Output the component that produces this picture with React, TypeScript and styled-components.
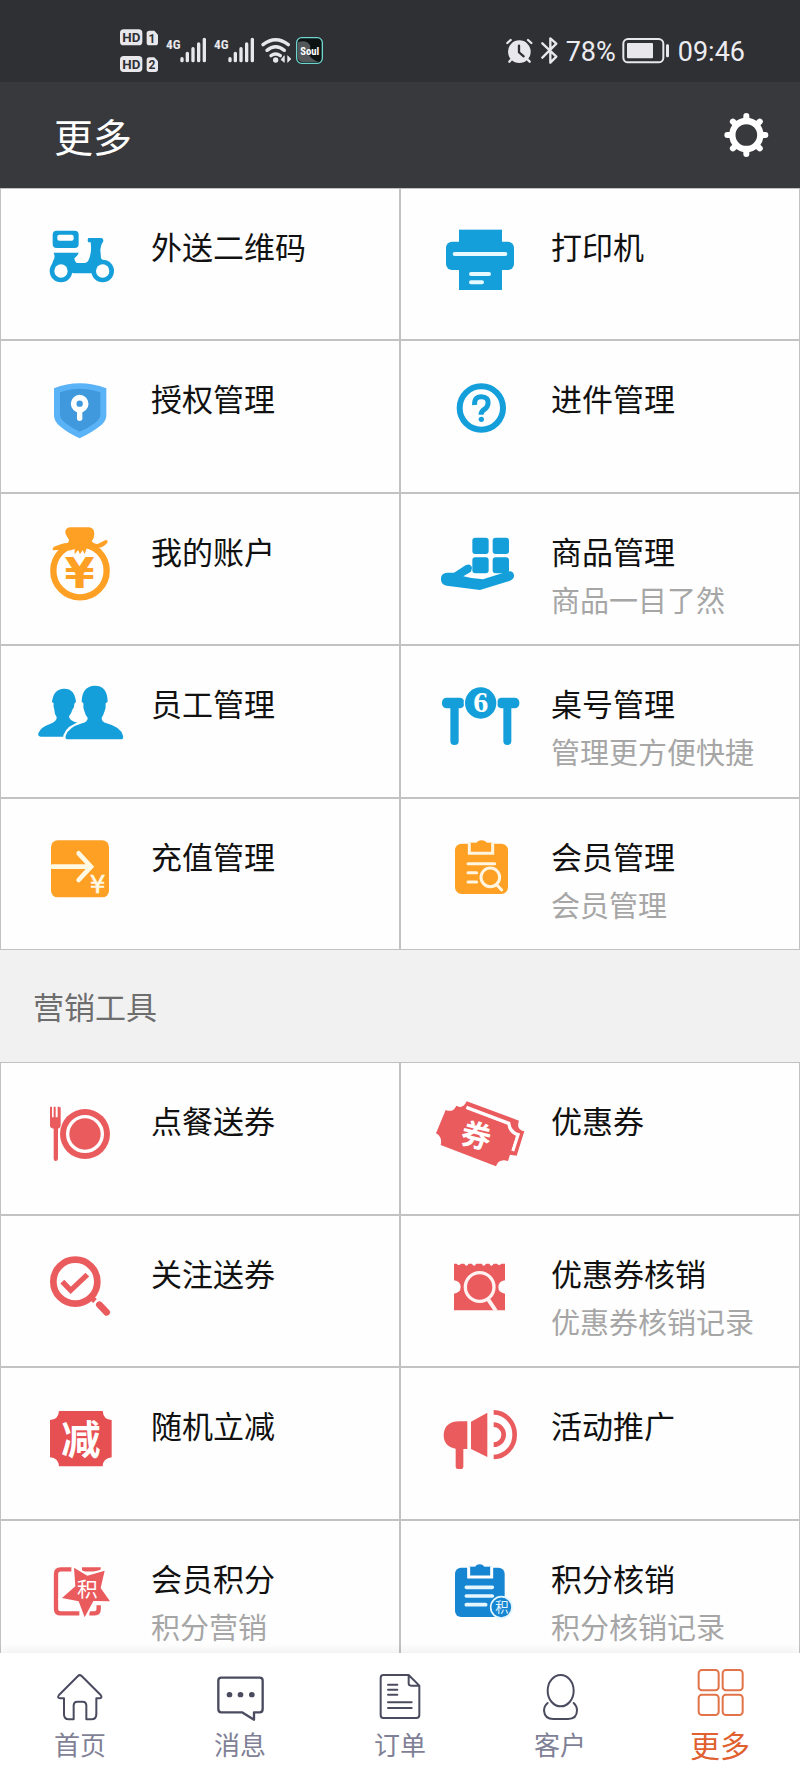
import React from "react";
import styled, { createGlobalStyle } from "styled-components";

const GlobalStyle = createGlobalStyle`
  *, *::before, *::after { box-sizing: border-box; }
  body {
    margin: 0;
    background: #fff;
    font-family: "Noto Sans CJK SC", "Noto Sans", sans-serif;
  }
`;

const cjk = '"Noto Sans CJK SC", sans-serif';
const BLUE = "#149fda";
const ORANGE = "#fea024";
const RED = "#ea5b5e";

/* ---------- layout ---------- */

const Screen = styled.div`
  display: flex;
  flex-direction: column;
  height: 100vh;
  overflow: hidden;
`;

const StatusBar = styled.div`
  flex: none;
  display: flex;
  align-items: center;
  justify-content: space-between;
  height: 82px;
  padding: 0 55px 0 119px;
  background: #2f3034;
  color: #ececf0;
  font: 400 27px/40px Roboto, sans-serif;
`;

const StatusGroup = styled.div<{ $gap: number }>`
  display: flex;
  align-items: center;
  gap: ${(p) => p.$gap}px;
`;

const StatusText = styled.span`
  padding-top: 22px;
`;

const StatusSvg = styled.svg<{ $width: number }>`
  flex: none;
  width: ${(p) => p.$width}px;
  height: 82px;
  overflow: visible;
`;

const Header = styled.header`
  flex: none;
  display: flex;
  align-items: center;
  justify-content: space-between;
  height: 106px;
  padding: 0 30px 0 54px;
  background: #38393d;
  color: #fff;
`;

const Title = styled.h1`
  margin: 0;
  font-size: 39px;
  line-height: 54px;
  font-weight: 400;
`;

const IconButton = styled.button`
  display: block;
  padding: 0;
  border: 0;
  background: none;
  cursor: pointer;

  svg { display: block; width: 48px; height: 48px; }
`;

const Content = styled.main`
  flex: 1;
  min-height: 0;
  overflow-y: auto;
  scrollbar-width: none;
`;

const Grid = styled.div<{ $minHeight: number }>`
  display: grid;
  grid-template-columns: 1fr 1fr;
  grid-auto-rows: 1fr;
  min-height: ${(p) => p.$minHeight}px;
`;

const Cell = styled.a`
  display: flex;
  align-items: flex-start;
  gap: 23px;
  padding: 27px 0 0 31px;
  border: 1px solid #c2c2c2;
  background: #fefefe;
  color: #111;
  text-decoration: none;
`;

const CellIcon = styled.svg`
  flex: none;
  width: 96px;
  height: 96px;
  overflow: visible;
`;

const CellText = styled.div`
  display: flex;
  flex-direction: column;
  padding-top: 6px;
`;

const CellTitle = styled.span`
  font-size: 31px;
  line-height: 48px;
`;

const CellNote = styled.span`
  color: #a6a6a6;
  font-size: 29px;
  line-height: 48px;
`;

const SectionTitle = styled.h2`
  display: flex;
  align-items: center;
  height: 112px;
  margin: 0;
  padding: 0 33px;
  background: #f1f1f1;
  color: #6d6d6d;
  font-size: 31px;
  line-height: 48px;
  font-weight: 400;
`;

const TabBar = styled.nav`
  flex: none;
  position: relative;
  display: grid;
  grid-template-columns: repeat(5, 1fr);
  height: 125px;
  background: #fff;
  box-shadow: 0 -2px 10px rgba(0, 0, 0, 0.07);
`;

const Tab = styled.a<{ $active?: boolean }>`
  display: flex;
  flex-direction: column;
  align-items: center;
  padding-top: 14px;
  color: ${(p) => (p.$active ? "#e0602f" : "#7f7f96")};
  font-size: ${(p) => (p.$active ? 30 : 26)}px;
  line-height: 34px;
  font-weight: 400;
  text-decoration: none;
`;

const TabIcon = styled.svg`
  width: 60px;
  height: 60px;
  fill: none;
  stroke-linecap: round;
  stroke-linejoin: round;
`;

/* ---------- status bar icons ---------- */

const HdBadges = () => (
  <StatusSvg $width={41} viewBox="357 0 123 246" aria-hidden="true">
    {[
      { y: 88, n: "1" },
      { y: 168, n: "2" },
    ].map(({ y, n }) => (
      <g key={n} fontFamily="Roboto, sans-serif" fontWeight="700" textAnchor="middle">
        <rect x="360" y={y} width="67" height="48" rx="11" fill="#e8e8ec" />
        <text x="394" y={y + 38} fontSize="40" fill="#2f3034">HD</text>
        <path d={`M448 ${y + 4}h15l11 12v24q0 8-8 8h-18q-8 0-8-8v-28q0-8 8-8z`} fill="#e8e8ec" />
        <text x="456" y={y + 40} fontSize="36" fill="#2f3034">{n}</text>
      </g>
    ))}
  </StatusSvg>
);

const Signal = () => (
  <StatusSvg $width={43} viewBox="495 0 129 246" aria-hidden="true">
    <text
      x="498"
      y="147"
      fontSize="40"
      fontWeight="700"
      fontFamily='"Roboto Condensed", "Liberation Sans Narrow", Roboto, sans-serif'
      fill="#e8e8ec"
    >
      4G
    </text>
    <g stroke="#e8e8ec" strokeWidth="10" strokeLinecap="round">
      <path d="M546 176v6M562 160v22M579 146v36M596 132v50M613 118v64" />
    </g>
  </StatusSvg>
);

const Wifi = () => (
  <StatusSvg $width={30} viewBox="784 0 90 246" aria-hidden="true">
    <g fill="none" stroke="#e8e8ec" strokeWidth="10" strokeLinecap="round">
      <path d="M790 134Q828 104 866 134" />
      <path d="M802 151Q828 130 854 151" />
      <path d="M814 167Q828 157 842 167" />
    </g>
    <circle cx="828" cy="180" r="8" fill="#e8e8ec" />
    <path d="M854 167v20l-10-8zM864 187v-20l10 10z" fill="#e8e8ec" stroke="#e8e8ec" strokeWidth="2" />
  </StatusSvg>
);

const SoulBadge = () => (
  <StatusSvg $width={28} viewBox="888 0 84 246" aria-hidden="true">
    <rect x="890" y="113" width="77" height="77" rx="15" fill="#0d1213" stroke="#6fd6cf" strokeWidth="4" />
    <path d="M893 126q30-8 38 12l-4 28q12 16 30 20h-48q-14 0-16-14z" fill="#54585a" />
    <text
      x="929"
      y="165"
      fontSize="32"
      fontWeight="700"
      fontFamily='"Roboto Condensed", "Liberation Sans Narrow", Roboto, sans-serif'
      textAnchor="middle"
      fill="#fff"
    >
      Soul
    </text>
  </StatusSvg>
);

const Alarm = () => (
  <StatusSvg $width={30} viewBox="318 0 90 246" aria-hidden="true">
    <circle cx="361" cy="155" r="34" fill="#e8e8ec" />
    <g fill="none" strokeLinecap="round">
      <path d="M325 129l10-9M397 129l-10-9" stroke="#e8e8ec" strokeWidth="7" />
      <path d="M336 179l-5 6M386 179l6 6" stroke="#e8e8ec" strokeWidth="7" />
      <path d="M360 137v20l14 12" stroke="#2f3034" strokeWidth="7" />
    </g>
  </StatusSvg>
);

const Bluetooth = () => (
  <StatusSvg $width={19} viewBox="426 0 57 246" aria-hidden="true">
    <path
      d="M430 130l42 40-18 18v-73l18 16-42 42"
      fill="none"
      stroke="#e8e8ec"
      strokeWidth="7"
      strokeLinejoin="round"
      strokeLinecap="round"
    />
  </StatusSvg>
);

const Battery = () => (
  <StatusSvg $width={50} viewBox="663 0 150 246" aria-hidden="true">
    <rect x="667" y="117" width="120" height="70" rx="14" fill="none" stroke="#e8e8ec" strokeWidth="6" />
    <rect x="678" y="129" width="78" height="46" rx="3" fill="#e8e8ec" />
    <rect x="795" y="133" width="9" height="39" rx="4" fill="#e8e8ec" />
  </StatusSvg>
);

const Gear = () => (
  <svg viewBox="-73 -72 144 144" aria-hidden="true">
    <circle r="42" fill="none" stroke="#fff" strokeWidth="19" />
    {[0, 45, 90, 135, 180, 225, 270, 315].map((a) => (
      <path
        key={a}
        d="M0-46V-57"
        stroke="#fff"
        strokeWidth="18"
        strokeLinecap="round"
        transform={`rotate(${a})`}
      />
    ))}
  </svg>
);

/* ---------- feature icons ---------- */

const icons = {
  scooter: (
    <CellIcon viewBox="96 84 288 288">
      <g fill={BLUE}>
        <path
          fillRule="evenodd"
          d="M170 128h54q12 0 12 12v28q0 12-12 12h-54q-12 0-12-12v-28q0-12 12-12zM178 140q-6 0-6 6v6q0 6 6 6h37q6 0 6-6v-6q0-6-6-6z"
        />
        <path d="M160 194h76q-3 10-13 17 2 13 8 14h22q10 0 14-12 9-22 5-50h-7q-4-6 0-13h40q6 3 5 10-8 10-9 25l2 26 35 40-20 5h-97l-67-20 5-17q8-10 2-25z" />
        <circle cx="183" cy="249" r="34" />
        <circle cx="308" cy="249" r="34" />
      </g>
      <circle cx="183" cy="249" r="20" fill="#fff" />
      <circle cx="308" cy="249" r="20" fill="#fff" />
    </CellIcon>
  ),
  printer: (
    <CellIcon viewBox="96 84 288 288">
      <g fill={BLUE}>
        <rect x="177" y="125" width="129" height="181" />
        <rect x="138" y="161" width="204" height="85" rx="18" />
      </g>
      <path d="M164 198h152M213 258h54M213 283h33" stroke="#e6f9ff" strokeWidth="12" strokeLinecap="round" />
    </CellIcon>
  ),
  shield: (
    <CellIcon viewBox="96 541 288 288">
      <path d="M162 602Q200 587 239 587T319 602V684Q319 700 300 715 275 735 239 752 205 737 180 716 162 700 162 684Z" fill="#5ab2f7" />
      <path d="M180 614Q210 603 239 603T301 614V680Q301 694 285 706 265 721 239 732 215 721 196 706 180 694 180 680Z" fill="#4199dd" />
      <circle cx="239" cy="648" r="18" fill="none" stroke="#fff" strokeWidth="17" />
      <path d="M239 668v24" stroke="#fff" strokeWidth="16" strokeLinecap="round" />
    </CellIcon>
  ),
  question: (
    <CellIcon viewBox="96 541 288 288" fill="none" stroke={BLUE}>
      <circle cx="244" cy="661" r="65" strokeWidth="18" />
      <path d="M224 652Q222 627 244 627T264 648Q263 658 253 665 243 672 243 681" strokeWidth="15" />
      <circle cx="244" cy="695" r="8" fill={BLUE} stroke="none" />
    </CellIcon>
  ),
  bag: (
    <CellIcon viewBox="96 92 288 288">
      <circle cx="240" cy="241" r="80" fill="none" stroke={ORANGE} strokeWidth="19" />
      <path d="M196 128q-2-17 18-17h54q15 2 15 20 0 14-8 22 8 10 18 8l24-12q8 0 5 8-12 14-28 16l-12 9-22-8-6 18-6-13-8 13-6-13-10 13v-16q-20 8-38 2l-26 2q-5-4 2-11 26-10 38-11 6 0 7-10-8-10-11-20z" fill={ORANGE} />
      <text x="239" y="293" fontSize="130" fontWeight="700" fontFamily='"DejaVu Sans", sans-serif' textAnchor="middle" fill={ORANGE}>
        ¥
      </text>
    </CellIcon>
  ),
  goods: (
    <CellIcon viewBox="96 92 288 288" fill={BLUE}>
      <rect x="217" y="142" width="49" height="49" rx="9" />
      <rect x="278" y="142" width="49" height="49" rx="9" />
      <rect x="217" y="201" width="49" height="48" rx="9" />
      <rect x="278" y="201" width="49" height="48" rx="9" />
      <path d="M123 268Q121 249 142 247L162 247 198 224Q213 218 216 233L213 244 190 258Q218 266 249 267L318 245Q340 238 342 255 343 267 328 272L240 299 140 286Q124 283 123 268Z" />
    </CellIcon>
  ),
  staff: (
    <CellIcon viewBox="96 550 288 288" fill={BLUE}>
      <path d="M156 637Q160 598 192 597T228 637L223 642Q224 652 217 660 214 672 207 680 207 690 222 696L236 700 208 741H122Q113 741 115 731 122 712 150 703 172 694 170 682 163 672 163 660 159 650 161 641Z" />
      <path
        d="M245 636Q246 589 284 588T323 636L317 641Q318 655 314 664 310 677 305 684 304 696 320 701 362 712 369 738 372 749 362 749H204Q194 749 197 738 206 713 246 701 264 696 263 684 256 677 253 664 249 655 250 641Z"
        stroke="#fff"
        strokeWidth="14"
        paintOrder="stroke"
      />
    </CellIcon>
  ),
  table: (
    <CellIcon viewBox="96 550 288 288" fill={BLUE}>
      <rect x="126" y="624" width="67" height="32" rx="14" />
      <rect x="291" y="624" width="67" height="32" rx="14" />
      <rect x="151" y="636" width="25" height="130" rx="12" />
      <rect x="310" y="636" width="24" height="130" rx="12" />
      <circle cx="242" cy="640" r="51" fill="#fff" />
      <circle cx="242" cy="640" r="47" />
      <text x="242" y="668" fontSize="90" fontWeight="700" fontFamily='"Liberation Serif", serif' textAnchor="middle" fill="#fff">
        6
      </text>
    </CellIcon>
  ),
  recharge: (
    <CellIcon viewBox="96 107 288 288">
      <rect x="153" y="150" width="174" height="171" rx="20" fill={ORANGE} />
      <path d="M158 229h108M236 189l37 40-37 40" fill="none" stroke="#fff9e4" strokeWidth="14" strokeLinecap="round" />
      <text x="293" y="309" fontSize="74" fontWeight="400" fontFamily='"DejaVu Sans", sans-serif' textAnchor="middle" fill="#fff9e4" stroke="#fff9e4" strokeWidth="2">
        ¥
      </text>
    </CellIcon>
  ),
  member: (
    <CellIcon viewBox="96 107 288 288">
      <rect x="165" y="160" width="159" height="151" rx="20" fill={ORANGE} />
      <path d="M208 157v32h70v-32" fill={ORANGE} stroke="#fff5e0" strokeWidth="9" />
      <path d="M215 164q6-4 14-4 4-10 16-10t16 10q8 0 10 4v12h-56z" fill={ORANGE} />
      <g fill="none" stroke="#fff5e0" strokeWidth="9" strokeLinecap="round">
        <path d="M204 220h80M204 247h26M204 275h26" />
        <circle cx="271" cy="261" r="28" />
        <path d="M290 283l15 16" />
      </g>
    </CellIcon>
  ),
  dining: (
    <CellIcon viewBox="96 87 288 288">
      <circle cx="255" cy="219" r="75" fill={RED} />
      <circle cx="255" cy="219" r="52" fill="none" stroke="#fff" strokeWidth="10" />
      <path d="M150 139q3-5 6 0v30h5v-30q2-5 6 0v30h6v-30q3-5 6 0l3 0v55q0 6-8 9v90q-1 7-7 7t-6-7v-90q-11-3-11-9z" fill={RED} stroke="#fff" strokeWidth="4" paintOrder="stroke" />
    </CellIcon>
  ),
  coupon: (
    <CellIcon viewBox="96 87 288 288">
      <path d="M200 121L357 179Q351 195 358 203 364 210 373 211L350 284 320 280 170 138Q190 143 200 121Z" fill={RED} />
      <path d="M199 139L326 187Q330 214 354 221L338 270" fill="none" stroke="#fff" strokeWidth="10" />
      <path d="M137 147Q159 156 169 134L322 193Q322 217 346 229L324 300 313 298Q294 297 288 316L122 252Q128 228 108 217Z" fill={RED} />
      <text x="229" y="257" fontSize="90" fontWeight="700" fontFamily={cjk} textAnchor="middle" fill="#fff" transform="rotate(14 229 224)">
        券
      </text>
    </CellIcon>
  ),
  follow: (
    <CellIcon viewBox="96 544 288 288" fill="none" stroke={RED}>
      <circle cx="226" cy="660" r="66" strokeWidth="20" />
      <path d="M187 660l25 26 50-47" strokeWidth="16" />
      <path d="M270 704l15 14" strokeWidth="16" />
      <path d="M298 729l22 23" strokeWidth="20" strokeLinecap="round" />
    </CellIcon>
  ),
  verify: (
    <CellIcon viewBox="96 544 288 288">
      <path
        d="M162 606h8q6 8 13 0h10q6 12 13 0h10q6 12 13 0h16q6 12 13 0h10q6 12 13 0h10q6 8 13 0h11v50q-20 3-20 20t20 20v50h-153v-50q20-3 20-20t-20-20z"
        fill={RED}
      />
      <circle cx="239" cy="676" r="43" fill="none" stroke="#fff2f0" strokeWidth="10" />
      <path d="M263 711l25 37" stroke="#fff2f0" strokeWidth="12" />
    </CellIcon>
  ),
  discount: (
    <CellIcon viewBox="96 102 288 288">
      <path d="M177 150h131q2 26 27 27v112q-26 3-27 27h-131q-2-25-27-27v-112q25-1 27-27z" fill="#e75052" />
      <text x="243" y="279" fontSize="118" fontWeight="700" fontFamily={cjk} textAnchor="middle" fill="#fff">
        减
      </text>
    </CellIcon>
  ),
  promote: (
    <CellIcon viewBox="96 102 288 288">
      <path d="M202 181v83h-12v54q0 6-6 6h-10q-7 0-7-7v-54q-36-6-36-41 2-41 48-41z" fill={RED} />
      <path d="M213 182l49-27v133l-49-24z" fill={RED} />
      <g fill="none" stroke={RED} strokeWidth="14">
        <path d="M281 191a30 30 0 0 1 0 60" />
        <path d="M281 154a63 67 0 0 1 0 134" />
      </g>
    </CellIcon>
  ),
  points: (
    <CellIcon viewBox="96 560 288 288">
      <path d="M214 624h-32q-14 0-14 14v104q0 14 14 14h56M268 756h16q12 0 12-12v-12M246 624h56" fill="none" stroke={RED} strokeWidth="13" />
      <path
        d="M222 619L262 643 314 628 302 680 330 720 280 719 254 768 236 720 186 710 226 675Z"
        fill={RED}
        stroke="#fff"
        strokeWidth="12"
        paintOrder="stroke"
      />
      <text x="262" y="708" fontSize="62" fontWeight="400" fontFamily={cjk} textAnchor="middle" fill="#fff">
        积
      </text>
    </CellIcon>
  ),
  pointsVerify: (
    <CellIcon viewBox="96 560 288 288">
      <rect x="165" y="619" width="149" height="148" rx="18" fill="#1685d2" />
      <path d="M206 616v31h69v-31" fill="#1685d2" stroke="#fff" strokeWidth="9" />
      <path d="M213 622q6-3 12-3 3-10 14-10t14 10q8 0 12 3v12h-52z" fill="#1685d2" />
      <path d="M199 678h78M199 704h78M199 730h58" stroke="#e4f6ff" strokeWidth="11" strokeLinecap="round" />
      <circle cx="304" cy="738" r="32" fill="#1685d2" stroke="#e4f6ff" strokeWidth="5" />
      <text x="306" y="752" fontSize="40" fontWeight="400" fontFamily={cjk} textAnchor="middle" fill="#e4f6ff">
        积
      </text>
    </CellIcon>
  ),
};

type Feature = { icon: keyof typeof icons; title: string; note?: string };

const manageItems: Feature[] = [
  { icon: "scooter", title: "外送二维码" },
  { icon: "printer", title: "打印机" },
  { icon: "shield", title: "授权管理" },
  { icon: "question", title: "进件管理" },
  { icon: "bag", title: "我的账户" },
  { icon: "goods", title: "商品管理", note: "商品一目了然" },
  { icon: "staff", title: "员工管理" },
  { icon: "table", title: "桌号管理", note: "管理更方便快捷" },
  { icon: "recharge", title: "充值管理" },
  { icon: "member", title: "会员管理", note: "会员管理" },
];

const marketingItems: Feature[] = [
  { icon: "dining", title: "点餐送券" },
  { icon: "coupon", title: "优惠券" },
  { icon: "follow", title: "关注送券" },
  { icon: "verify", title: "优惠券核销", note: "优惠券核销记录" },
  { icon: "discount", title: "随机立减" },
  { icon: "promote", title: "活动推广" },
  { icon: "points", title: "会员积分", note: "积分营销" },
  { icon: "pointsVerify", title: "积分核销", note: "积分核销记录" },
];

const FeatureGrid = ({ items, minHeight }: { items: Feature[]; minHeight: number }) => (
  <Grid $minHeight={minHeight}>
    {items.map((item) => (
      <Cell key={item.title} href="#">
        {icons[item.icon]}
        <CellText>
          <CellTitle>{item.title}</CellTitle>
          {item.note && <CellNote>{item.note}</CellNote>}
        </CellText>
      </Cell>
    ))}
  </Grid>
);

/* ---------- tab bar ---------- */

const INK = "#4b4b60";

const tabs = [
  {
    label: "首页",
    icon: (
      <TabIcon viewBox="150 921 180 180" stroke={INK} strokeWidth="6">
        <path d="M234 948Q239 943 245 948L302 1005Q308 1014 299 1015H289V1064Q288 1078 275 1078H259V1035Q258 1025 248 1025H232Q222 1025 221 1035V1078H206Q193 1078 192 1064V1015H181Q170 1014 177 1005Z" />
      </TabIcon>
    ),
  },
  {
    label: "消息",
    icon: (
      <TabIcon viewBox="630 921 180 180" stroke={INK} strokeWidth="7">
        <path d="M664 953H779Q788 953 788 962V1047Q788 1057 779 1057H762V1079L726 1057H664Q655 1057 655 1047V962Q655 953 664 953Z" />
        <path d="M688 1004h1M721 1004h1M755 1004h1" strokeWidth="16" />
      </TabIcon>
    ),
  },
  {
    label: "订单",
    icon: (
      <TabIcon viewBox="1110 921 180 180" stroke={INK} strokeWidth="6">
        <path d="M1150 945H1226L1258 977V1065Q1258 1074 1249 1074H1150Q1142 1074 1142 1065V954Q1142 945 1150 945ZM1226 945V970Q1226 977 1233 977H1258" />
        <path d="M1164 974h28M1164 989h28M1164 1004h28M1164 1027h71M1164 1044h71" />
      </TabIcon>
    ),
  },
  {
    label: "客户",
    icon: (
      <TabIcon viewBox="390 921 180 180" stroke={INK} strokeWidth="6">
        <ellipse cx="482" cy="992" rx="39" ry="47" />
        <path d="M443 1029Q432 1038 432 1052 434 1077 460 1077H504Q531 1077 531 1051 531 1038 521 1029" />
      </TabIcon>
    ),
  },
  {
    label: "更多",
    active: true,
    icon: (
      <TabIcon viewBox="870 921 180 180" stroke="#e27349" strokeWidth="6">
        <rect x="896" y="930" width="60" height="61" rx="10" />
        <rect x="968" y="930" width="60" height="61" rx="10" />
        <rect x="896" y="1004" width="60" height="61" rx="10" />
        <rect x="968" y="1004" width="60" height="61" rx="10" />
      </TabIcon>
    ),
  },
];

export default function App() {
  return (
    <>
      <GlobalStyle />
      <Screen>
        <StatusBar>
          <StatusGroup $gap={5}>
            <HdBadges />
            <Signal />
            <Signal />
            <Wifi />
            <SoulBadge />
          </StatusGroup>
          <StatusGroup $gap={6}>
            <Alarm />
            <Bluetooth />
            <StatusText>78%</StatusText>
            <Battery />
            <StatusText>09:46</StatusText>
          </StatusGroup>
        </StatusBar>
        <Header>
          <Title>更多</Title>
          <IconButton type="button" aria-label="设置">
            <Gear />
          </IconButton>
        </Header>
        <Content>
          <FeatureGrid items={manageItems} minHeight={762} />
          <SectionTitle>营销工具</SectionTitle>
          <FeatureGrid items={marketingItems} minHeight={610} />
        </Content>
        <TabBar>
          {tabs.map((tab) => (
            <Tab key={tab.label} href="#" $active={tab.active}>
              {tab.icon}
              {tab.label}
            </Tab>
          ))}
        </TabBar>
      </Screen>
    </>
  );
}
